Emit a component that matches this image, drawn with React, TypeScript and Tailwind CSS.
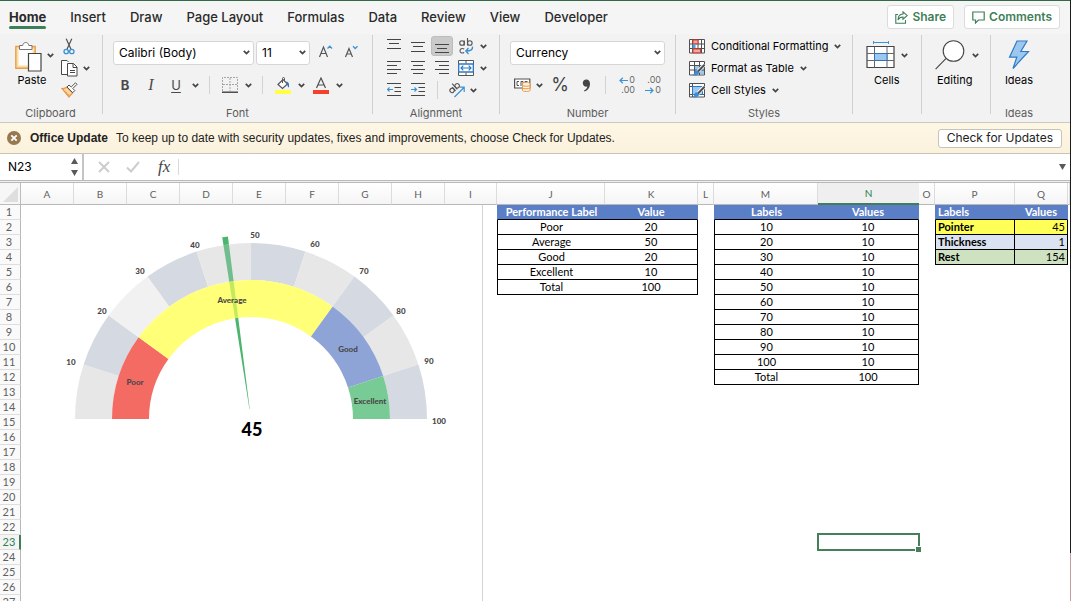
import type { ReactNode } from "react";

const columns = [
  ["A", "w-[53px]"],
  ["B", "w-[53px]"],
  ["C", "w-[53px]"],
  ["D", "w-[53px]"],
  ["E", "w-[53px]"],
  ["F", "w-[53px]"],
  ["G", "w-[53px]"],
  ["H", "w-[53px]"],
  ["I", "w-[52px]"],
  ["J", "w-[108px]"],
  ["K", "w-[93px]"],
  ["L", "w-[16px]"],
  ["M", "w-[104px]"],
  ["N", "w-[101px]"],
  ["O", "w-[16px]"],
  ["P", "w-[80px]"],
  ["Q", "w-[53px]"],
  ["", ""],
];

const tabs = ["Home", "Insert", "Draw", "Page Layout", "Formulas", "Data", "Review", "View", "Developer"];

const performance = [
  ["Performance Label", "Value"],
  ["Poor", "20"],
  ["Average", "50"],
  ["Good", "20"],
  ["Excellent", "10"],
  ["Total", "100"],
];

const scale = [
  ["Labels", "Values"],
  ["10", "10"],
  ["20", "10"],
  ["30", "10"],
  ["40", "10"],
  ["50", "10"],
  ["60", "10"],
  ["70", "10"],
  ["80", "10"],
  ["90", "10"],
  ["100", "10"],
  ["Total", "100"],
];

const pointer = [
  ["Labels", "Values", "bg-[#5b7fc7] text-white"],
  ["Pointer", "45", "bg-[#ffff57]"],
  ["Thickness", "1", "bg-[#dbe2f1]"],
  ["Rest", "154", "bg-[#cee1c0]"],
];

function Chevron() {
  return (
    <svg width="7" height="5" viewBox="0 0 7 5" className="shrink-0" aria-hidden="true">
      <path d="M0.8 0.9 3.5 3.6 6.2 0.9" fill="none" stroke="#444" strokeWidth="1.7" />
    </svg>
  );
}

function Tool({ label, className = "", children }: { label: string; className?: string; children: ReactNode }) {
  return (
    <button aria-label={label} className={`flex h-5 shrink-0 items-center justify-center ${className}`}>
      {children}
    </button>
  );
}

function Group({ name, className, children }: { name?: string; className: string; children: ReactNode }) {
  return (
    <section className={`flex h-[86px] shrink-0 flex-col ${className}`}>
      {children}
      {name && <div className="mt-auto text-center text-[11px] leading-4 text-[#5c5c5c]">{name}</div>}
    </section>
  );
}

function Divider() {
  return <div className="h-[79px] w-px shrink-0 bg-[#d0d0d0]" />;
}

function Rule() {
  return <div className="h-[18px] w-px shrink-0 bg-[#d2d2d2]" />;
}

function Picker({ label, options, className }: { label: string; options: string[]; className: string }) {
  return (
    <div className={`relative ${className}`}>
      <select
        aria-label={label}
        className="h-6 w-full appearance-none rounded-[3px] border border-[#d6d6d6] bg-white px-[5px] text-[12px] leading-5 text-black"
      >
        {options.map((o) => (
          <option key={o}>{o}</option>
        ))}
      </select>
      <span className="pointer-events-none absolute inset-y-0 right-1 flex items-center">
        <Chevron />
      </span>
    </div>
  );
}

function Lines({ rows }: { rows: number[][] }) {
  return (
    <svg width="14" height="16" viewBox="0 0 14 16" aria-hidden="true">
      {rows.map(([x, y, w]) => (
        <path key={y} d={`M${x} ${y + 0.5}h${w}`} stroke="#454545" />
      ))}
    </svg>
  );
}

function PasteIcon() {
  return (
    <svg width="30" height="32" viewBox="0 0 30 32" fill="none" aria-hidden="true">
      <path d="M1.8 6.5h19.4v21.8H1.8z" fill="#f9dfa0" stroke="#e8a04e" strokeWidth="1.4" />
      <path d="M4.5 9h14v16.5h-14z" fill="#fdfdfd" />
      <path d="M5.5 9.5v-4h3.2c.5-4 5.600-4 6.100 0h3.200v4z" fill="#fff" stroke="#777" />
      <path d="M14.500 13.500h12.500v17.500h-12.500z" fill="#fff" stroke="#444" strokeWidth="1.200" />
    </svg>
  );
}

function CutIcon() {
  return (
    <svg width="14" height="17" viewBox="0 0 14 17" fill="none" aria-hidden="true">
      <path d="M4.200 .8 9 11.300M9.800 .8 5 11.300" stroke="#505050" strokeWidth="1.200" />
      <circle cx="4.200" cy="13.500" r="2.200" stroke="#3c93d3" strokeWidth="1.300" />
      <circle cx="9.800" cy="13.500" r="2.200" stroke="#3c93d3" strokeWidth="1.300" />
    </svg>
  );
}

function CopyIcon() {
  return (
    <svg width="17" height="17" viewBox="0 0 17 17" fill="none" stroke="#484848" aria-hidden="true">
      <path d="M6.500 14.500h-6V.5h5.500l1.500 1.500" fill="#fff" />
      <path d="M6.500 3.500h6l3.500 3.500v9H6.500z" fill="#fff" />
      <path d="M12 3.500v4h4M9 10.500h5M9 12.500h5" />
    </svg>
  );
}

function BrushIcon() {
  return (
    <svg width="17" height="16" viewBox="0 0 17 16" fill="none" aria-hidden="true">
      <path d="M1 6.500c2 .2 3.500-.3 5-1.500l5.500 6c-1 1-2.500 2.500-3.500 4z" fill="#fbd79a" stroke="#e8944a" strokeWidth="1.200" />
      <path d="M3.500 9.500 6 11M6 12l2 1" stroke="#e8944a" />
      <path d="m6 5 2-2 2.200 2L14.500.8l1.500 1.500-4.200 4.200 2 2-2 2.200z" fill="#fff" stroke="#505050" />
    </svg>
  );
}

function FontSizeIcon({ grow }: { grow: boolean }) {
  return (
    <svg width="16" height="15" viewBox="0 0 16 15" fill="none" aria-hidden="true">
      {grow ? (
        <>
          <path d="M1.500 12 5.500 2l4 10M3 8.500h5" stroke="#555" strokeWidth="1.200" />
          <path d="m9.500 3.500 2.300-2.300L14 3.500" stroke="#3c93d3" strokeWidth="1.300" />
        </>
      ) : (
        <>
          <path d="M1.500 12 5 3.500 8.500 12M3 9h4.200" stroke="#555" strokeWidth="1.200" />
          <path d="M9 1.200 11.200 3.500l2.300-2.300" stroke="#3c93d3" strokeWidth="1.300" />
        </>
      )}
    </svg>
  );
}

function BordersIcon() {
  return (
    <svg width="16" height="16" viewBox="0 0 16 16" fill="none" aria-hidden="true">
      <path d="M.5 14V.5h15V14M8 1v13M1 7.500h14" stroke="#a6a6a6" strokeDasharray="2 1" />
      <path d="M0 15.200h16" stroke="#333" strokeWidth="1.300" />
    </svg>
  );
}

function FillIcon() {
  return (
    <svg width="16" height="17" viewBox="0 0 16 17" fill="none" aria-hidden="true">
      <path d="M3 7.500 8 2.500l4.500 4.500-5 4.500z" fill="#fff" stroke="#555" strokeWidth="1.200" />
      <path d="M7.500 6V1.500c0-1.500 2-1.500 2 0v2" stroke="#555" />
      <path d="M11 4.500c2.500 0 3.500 2 3 6-1.500-.5-1.500-2.500-2-4z" fill="#2f75b8" />
      <path d="M0 13h16v4H0z" fill="#ffff45" />
    </svg>
  );
}

function FontColorIcon() {
  return (
    <svg width="16" height="17" viewBox="0 0 16 17" fill="none" aria-hidden="true">
      <path d="M3.500 11 8 1l4.500 10M5 8h6" stroke="#505050" strokeWidth="1.200" />
      <path d="M0 13h16v4H0z" fill="#f5402c" />
    </svg>
  );
}

function WrapIcon() {
  return (
    <svg width="16" height="18" viewBox="0 0 16 18" fill="none" aria-hidden="true">
      <g stroke="#555" strokeWidth="1.100">
        <circle cx="4" cy="6" r="2.300" />
        <path d="M6.300 3.500v5M9.500 1v7.500M6.200 15.500c-2.500 1.300-4.200 0-4.200-1.700s1.700-3 4.200-1.700" />
        <circle cx="11.800" cy="6" r="2.300" />
      </g>
      <path d="M14.500 9.500c.5 3-1.500 4.500-6.500 4.500M10.500 11 7.800 14l2.700 3" stroke="#3a8fd0" strokeWidth="1.300" />
    </svg>
  );
}

function MergeIcon() {
  return (
    <svg width="16" height="16" viewBox="0 0 16 16" fill="none" aria-hidden="true">
      <path d="M.5 .5h15v15H.5zM8 .5v3M8 12.500v3" fill="#fff" stroke="#555" />
      <path d="M.7 4h14.600v8H.7z" fill="#fff" stroke="#2f78bf" strokeWidth="1.300" />
      <path d="M3 8h10M5.300 5.700 3 8l2.300 2.300M10.700 5.700 13 8l-2.300 2.300" stroke="#2f78bf" strokeWidth="1.200" />
    </svg>
  );
}

function IndentIcon({ right }: { right: boolean }) {
  return (
    <svg width="14" height="14" viewBox="0 0 14 14" fill="none" aria-hidden="true">
      <path d="M0 .5h14M7.500 4.500H14M7.500 8.500H14M0 12.500h14" stroke="#454545" />
      <path d={right ? "M0 6.500h5.500M3.500 4.500l2 2-2 2" : "M.5 6.500H6M2.500 4.500l-2 2 2 2"} stroke="#3c93d3" strokeWidth="1.200" />
    </svg>
  );
}

function OrientationIcon() {
  return (
    <svg width="17" height="16" viewBox="0 0 17 16" fill="none" aria-hidden="true">
      <g stroke="#555" strokeWidth="1.100" transform="rotate(-42 6 6)">
        <circle cx="3" cy="6.500" r="2.200" />
        <path d="M5.300 4.200v5M7.600 1.500v7.700" />
        <circle cx="9.800" cy="6.500" r="2.200" />
      </g>
      <path d="M6.500 15 16 5.500M11.500 5.200h4.700V10" stroke="#3c93d3" strokeWidth="1.200" />
    </svg>
  );
}

function CurrencyIcon() {
  return (
    <svg width="17" height="14" viewBox="0 0 17 14" fill="none" aria-hidden="true">
      <path d="M.6 1h15.200v9H.6z" fill="#fff" stroke="#505050" strokeWidth="1.200" />
      <path d="M5 3.500H3v4h2M7 8V3.500h2V6M11 5V3.500h2.500" stroke="#505050" />
      <path d="M8.500 5.500c0-1.500 7.500-1.500 7.500 0v7c0 1.300-7.500 1.300-7.500 0z" fill="#fff1df" stroke="#e79a4c" />
      <path d="M8.500 7.500c1 1 6.500 1 7.500 0M8.500 10c1 1 6.500 1 7.500 0" stroke="#e79a4c" />
    </svg>
  );
}

function DecimalIcon({ more }: { more: boolean }) {
  return (
    <span className="relative flex w-4 flex-col items-end text-[9px] leading-[10px] text-[#6b6b6b]">
      <span>{more ? "0" : ".00"}</span>
      <span>{more ? ".00" : "0"}</span>
      <svg
        width="9"
        height="7"
        viewBox="0 0 9 7"
        fill="none"
        className={more ? "absolute top-[2px] left-0" : "absolute bottom-px left-0"}
        aria-hidden="true"
      >
        <path d={more ? "M1 3.500h8M3.800.8 1 3.500l2.800 2.700" : "M0 3.500h8M5.200.8 8 3.500 5.200 6.200"} stroke="#3c93d3" strokeWidth="1.200" />
      </svg>
    </span>
  );
}

function ConditionalIcon() {
  return (
    <svg width="16" height="15" viewBox="0 0 16 15" fill="none" aria-hidden="true">
      <path d="M.5 .5h15v13.500H.5zM.5 5h15M.5 9.500h15M3.500 .5V14M12.500 .5V14M9 .5V14" fill="#fff" stroke="#505050" />
      <path d="M4 1h5v3.800H4zM4 10h7.500v3.800H4z" fill="#f6a79f" stroke="#dd3b2c" />
      <path d="M3.500 5.200h3v4h-3z" fill="#4a9de0" />
    </svg>
  );
}

function TableStyleIcon({ cell }: { cell: boolean }) {
  return (
    <svg width="16" height="15" viewBox="0 0 16 15" fill="none" aria-hidden="true">
      <path d="M.5 .5h15v13.500H.5z" fill="#fff" stroke="#505050" />
      {cell ? (
        <>
          <path d="M3.500 .5V14M.5 3.500h15M.5 11.500h15" stroke="#505050" />
          <path d="M3.500 3.500h10v8h-10z" fill="#9ac8ef" stroke="#2e77bd" />
        </>
      ) : (
        <>
          <path d="M5.500 4.500H15V13H5.500z" fill="#9ac8ef" />
          <path d="M5.500 .5V14M10.500 .5V14M.5 4.500h15M.5 9h15" stroke="#505050" />
        </>
      )}
      <path d="m15.500 3.500-7.500 8" stroke="#fff" strokeWidth="3.500" />
      <path d="m15.500 3.800-7 7.200" stroke="#505050" strokeWidth="2" />
      <path d="M8.500 9.500c-2-.5-3 .5-3.200 2.200-.2 1.200-1 1.800-2 2.100 3 1.200 6.700.7 6.700-2.500z" fill="#3d8cd4" />
    </svg>
  );
}

function CellsIcon() {
  return (
    <svg width="29" height="28" viewBox="0 0 29 28" fill="none" aria-hidden="true">
      <path d="M7.500 0v3M22.500 0v3M7.500 1.500h15" stroke="#3c93d3" />
      <path d="M1 5.500h27v21H1z" fill="#fff" stroke="#444" strokeWidth="1.200" />
      <path d="M1 12.500h27M1 19.500h27M8.500 5.500v21M21 5.500v21" stroke="#666" />
      <path d="M8.500 12.500H21v7H8.500z" fill="#9cc8f0" stroke="#2d74b9" />
    </svg>
  );
}

function SearchIcon() {
  return (
    <svg width="31" height="30" viewBox="0 0 31 30" fill="none" stroke="#444" strokeWidth="1.100" aria-hidden="true">
      <circle cx="18.500" cy="11" r="10.300" fill="#fff" />
      <path d="M11.100 18.400.6 29.200" />
    </svg>
  );
}

function BoltIcon() {
  return (
    <svg width="22" height="30" viewBox="0 0 22 30" aria-hidden="true">
      <path d="M9 1h10l-6.200 10.500h7.700L5 28.500l3.800-11.300H1.500z" fill="#9cc8f0" stroke="#2f7cc4" strokeWidth="1.200" />
    </svg>
  );
}

function BigTool({ label, icon, menu, className }: { label: string; icon: ReactNode; menu?: boolean; className: string }) {
  return (
    <button className={`flex flex-col text-[11px] leading-4 text-black ${className}`}>
      <span className="flex h-[34px] items-center gap-[6px]">
        {icon}
        {menu && <Chevron />}
      </span>
      <span className="flex">{label}</span>
    </button>
  );
}

function Ribbon() {
  return (
    <div className="flex bg-[#f2f2f2] pt-px pb-px">
      <Group name="Clipboard" className="w-[101px]">
        <div className="flex pl-[14px]">
          <button className="mt-1 flex w-[47px] flex-col text-[11px] leading-4 text-black">
            <span className="flex h-[33px] items-center gap-[3px]">
              <PasteIcon />
              <Chevron />
            </span>
            <span className="w-9 text-center">Paste</span>
          </button>
          <div className="flex flex-col items-start gap-[2px] pt-px">
            <Tool label="Cut" className="w-4">
              <CutIcon />
            </Tool>
            <Tool label="Copy" className="gap-[5px]">
              <CopyIcon />
              <Chevron />
            </Tool>
            <Tool label="Format Painter">
              <BrushIcon />
            </Tool>
          </div>
        </div>
      </Group>
      <div className="w-px" />
      <Divider />
      <Group name="Font" className="w-[269px]">
        <div className="flex items-center pt-1 pl-[10px]">
          <Picker label="Font" options={["Calibri (Body)", "Arial"]} className="w-[141px]" />
          <Picker label="Font size" options={["11", "12"]} className="ml-[2px] w-[54px]" />
          <Tool label="Increase font size" className="ml-2 w-4">
            <FontSizeIcon grow />
          </Tool>
          <Tool label="Decrease font size" className="ml-[10px] w-4">
            <FontSizeIcon grow={false} />
          </Tool>
        </div>
        <div className="mt-[10px] flex items-center pl-[10px] text-[13px] leading-5 text-[#4a4a4a]">
          <Tool label="Bold" className="w-6 font-bold">
            B
          </Tool>
          <Tool label="Italic" className="w-7 font-['Liberation_Serif',serif] text-[16px] italic">
            I
          </Tool>
          <Tool label="Underline" className="w-[22px] underline underline-offset-2">
            U
          </Tool>
          <Tool label="Underline style" className="w-4">
            <Chevron />
          </Tool>
          <div className="mr-3 ml-[6px]">
            <Rule />
          </div>
          <Tool label="Borders" className="w-[30px] gap-[7px]">
            <BordersIcon />
            <Chevron />
          </Tool>
          <div className="mr-3 ml-[10px]">
            <Rule />
          </div>
          <Tool label="Fill color" className="w-[30px] gap-[7px]">
            <FillIcon />
            <Chevron />
          </Tool>
          <Tool label="Font color" className="ml-2 w-[30px] gap-[7px]">
            <FontColorIcon />
            <Chevron />
          </Tool>
        </div>
      </Group>
      <Divider />
      <Group name="Alignment" className="w-[126px]">
        <div className="flex flex-col gap-[2px] pt-px pl-[9px]">
          <div className="flex">
            <Tool label="Top align" className="w-6">
              <Lines rows={[[0, 1, 14], [2, 5, 10], [0, 10, 14]]} />
            </Tool>
            <Tool label="Middle align" className="w-6">
              <Lines rows={[[0, 4, 14], [2, 8, 10], [0, 13, 14]]} />
            </Tool>
            <Tool label="Bottom align" className="mx-px w-[22px] rounded-[3px] border border-[#bdbdbd] bg-[#cacaca]">
              <Lines rows={[[0, 6, 14], [2, 10, 10], [0, 14, 14]]} />
            </Tool>
            <Tool label="Wrap text" className="w-6">
              <WrapIcon />
            </Tool>
            <Tool label="Wrap options" className="w-[10px]">
              <Chevron />
            </Tool>
          </div>
          <div className="flex">
            <Tool label="Align left" className="w-6">
              <Lines rows={[[0, 1, 14], [0, 5, 10], [0, 9, 14], [0, 13, 10]]} />
            </Tool>
            <Tool label="Center" className="w-6">
              <Lines rows={[[0, 1, 14], [2, 5, 10], [0, 9, 14], [2, 13, 10]]} />
            </Tool>
            <Tool label="Align right" className="w-6">
              <Lines rows={[[0, 1, 14], [4, 5, 10], [0, 9, 14], [4, 13, 10]]} />
            </Tool>
            <Tool label="Merge and center" className="w-6">
              <MergeIcon />
            </Tool>
            <Tool label="Merge options" className="w-[10px]">
              <Chevron />
            </Tool>
          </div>
          <div className="flex items-center">
            <Tool label="Decrease indent" className="w-6">
              <IndentIcon right={false} />
            </Tool>
            <Tool label="Increase indent" className="w-6">
              <IndentIcon right />
            </Tool>
            <div className="mr-[10px] ml-[7px]">
              <Rule />
            </div>
            <Tool label="Orientation" className="gap-[5px]">
              <OrientationIcon />
              <Chevron />
            </Tool>
          </div>
        </div>
      </Group>
      <Divider />
      <Group name="Number" className="w-[175px]">
        <div className="pt-1 pl-[10px]">
          <Picker label="Number format" options={["Currency", "General"]} className="w-[155px]" />
        </div>
        <div className="mt-[10px] flex items-center pl-[14px] text-[#444]">
          <Tool label="Accounting format" className="gap-[5px]">
            <CurrencyIcon />
            <Chevron />
          </Tool>
          <Tool label="Percent style" className="ml-[7px] w-5 text-[18px] leading-5">
            %
          </Tool>
          <Tool label="Comma style" className="ml-[9px] w-[14px]">
            <svg width="9" height="13" viewBox="0 0 9 13" aria-hidden="true">
              <path d="M4.300.5C6.800.5 8 2.300 8 4.800c0 4-2.500 6.700-5.500 7.700l-.5-1c2-.9 3.200-2.200 3.300-3.900C3 8.200.8 6.500.8 4 .8 2 2.300.5 4.300.5z" fill="#444" />
            </svg>
          </Tool>
          <div className="mr-3 ml-3">
            <Rule />
          </div>
          <Tool label="Increase decimal" className="w-[18px]">
            <DecimalIcon more />
          </Tool>
          <Tool label="Decrease decimal" className="ml-2 w-[18px]">
            <DecimalIcon more={false} />
          </Tool>
        </div>
      </Group>
      <Divider />
      <Group name="Styles" className="w-[176px]">
        <div className="flex flex-col items-start gap-[2px] pt-px pl-[13px] text-[11px] leading-5 text-black">
          <button className="flex h-5 items-center gap-[6px]">
            <ConditionalIcon />
            Conditional Formatting
            <Chevron />
          </button>
          <button className="flex h-5 items-center gap-[6px]">
            <TableStyleIcon cell={false} />
            Format as Table
            <Chevron />
          </button>
          <button className="flex h-5 items-center gap-[6px]">
            <TableStyleIcon cell />
            Cell Styles
            <Chevron />
          </button>
        </div>
      </Group>
      <Divider />
      <Group className="w-[68px] pt-[3px] pl-[13px]">
        <BigTool label="Cells" menu icon={<CellsIcon />} className="items-start [&>span:last-child]:ml-2" />
      </Group>
      <Divider />
      <Group className="w-[68px] pt-[3px] pl-[13px]">
        <BigTool label="Editing" menu icon={<SearchIcon />} className="items-start [&>span:last-child]:ml-[2px]" />
      </Group>
      <Divider />
      <Group name="Ideas" className="w-14 pt-[3px]">
        <BigTool label="Ideas" icon={<BoltIcon />} className="items-center" />
      </Group>
    </div>
  );
}

const CX = 251;
const CY = 419;

function point(value: number, r: number) {
  const a = Math.PI * (1 - value / 100);
  return `${(CX + r * Math.cos(a)).toFixed(2)} ${(CY - r * Math.sin(a)).toFixed(2)}`;
}

function ring(from: number, to: number, inner: number, outer: number) {
  return `M${point(from, outer)}A${outer} ${outer} 0 0 1 ${point(to, outer)}L${point(to, inner)}A${inner} ${inner} 0 0 0 ${point(from, inner)}Z`;
}

const outerBands = ["#e7e7e7", "#d5d9e2", "#f1f1f1", "#d5d9e2", "#e7e7e7", "#d5d9e2", "#e7e7e7", "#d5d9e2", "#e7e7e7", "#d5d9e2"];

const innerBands: [number, number, string][] = [
  [0, 20, "#f46b64"],
  [20, 70, "#ffff78"],
  [70, 90, "#8ea4d7"],
  [90, 100, "#78cb94"],
];

const needle: [number, number, string][] = [
  [10, 102, "#4cb56c"],
  [102, 139, "#c3ea5e"],
  [139, 176, "#72bd8d"],
  [176, 184, "#4cb56c"],
];

const chartLabels: [string, number, number][] = [
  ["10", 71, 365],
  ["20", 102, 314],
  ["30", 140, 274],
  ["40", 195, 248],
  ["50", 255, 238],
  ["60", 315, 247],
  ["70", 364, 274],
  ["80", 401, 314],
  ["90", 429, 364],
  ["100", 439, 424],
  ["Average", 232, 303],
  ["Poor", 135, 385],
  ["Good", 348, 352],
  ["Excellent", 370, 404],
];

function Gauge() {
  return (
    <svg width="461" height="396" viewBox="21 205 461 396" role="img" aria-label="Performance gauge" className="block">
      {outerBands.map((c, i) => (
        <path key={i} d={ring(i * 10, i * 10 + 10, 139, 176)} fill={c} />
      ))}
      {innerBands.map(([a, b, c]) => (
        <path key={a} d={ring(a, b, 102, 139)} fill={c} />
      ))}
      {needle.map(([r1, r2, c]) => (
        <path key={r1} d={ring(45, 46, r1, r2)} fill={c} />
      ))}
      <g className="text-[8px] font-black" fill="#484848" textAnchor="middle">
        {chartLabels.map(([t, x, y]) => (
          <text key={t} x={x} y={y}>
            {t}
          </text>
        ))}
      </g>
      <text x="252" y="436" textAnchor="middle" className="text-[18px] font-black" fill="#000">
        45
      </text>
    </svg>
  );
}

function PairCells({ pair, row }: { pair?: string[]; row: number }) {
  if (!pair) return null;
  const head = row === 1;
  const look = head ? "bg-[#5b7fc7] font-bold text-white" : "text-black";
  return (
    <>
      <td className={`border-b border-l border-b-black p-0 text-center ${head ? "border-l-[#5b7fc7]" : "border-l-black"} ${look}`}>{pair[0]}</td>
      <td className={`border-r border-b border-b-black p-0 text-center ${head ? "border-r-[#5b7fc7]" : "border-r-black"} ${look}`}>{pair[1]}</td>
    </>
  );
}

function Sheet() {
  const rows = Array.from({ length: 27 }, (_, i) => i + 1);
  return (
    <div className="min-h-0 flex-1 overflow-hidden bg-white">
      <table className="w-full table-fixed border-separate border-spacing-0 font-['Lato','Open_Sans',sans-serif] text-[11px] leading-[14px]">
        <colgroup>
          <col className="w-[21px]" />
          {columns.map(([name, w]) => (
            <col key={name} className={w} />
          ))}
        </colgroup>
        <thead>
          <tr className="h-[22px] text-[10px] text-[#606060]">
            <th scope="col" aria-label="Select all" className="border-r border-b border-[#bcbcbc] bg-[#f7f7f7] p-0">
              <svg width="15" height="15" viewBox="0 0 15 15" className="mt-[2px] ml-[3px] block" aria-hidden="true">
                <path d="M15 0v15H0z" fill="#dedede" />
              </svg>
            </th>
            {columns.map(([name]) => (
              <th
                key={name}
                scope="col"
                className={
                  name === "N"
                    ? "border-b-2 border-[#3f7e57] bg-[#efefef] p-0 font-normal text-[#2f8050]"
                    : "border-r border-b border-r-[#dcdcdc] border-b-[#b8b8b8] bg-linear-to-b from-white to-[#f5f5f5] p-0 font-normal"
                }
              >
                {name}
              </th>
            ))}
          </tr>
        </thead>
        <tbody>
          {rows.map((n) => (
            <tr key={n} className="h-[15px]">
              <th
                scope="row"
                className={
                  n === 23
                    ? "border-r-2 border-b border-r-[#3f7e57] border-b-[#dedede] bg-[#f4f4f4] p-0 pr-px font-normal text-[#2f8050]"
                    : "border-r border-b border-r-[#b8b8b8] border-b-[#dedede] bg-[#fafafa] p-0 pr-[2px] font-normal text-[#606060]"
                }
              >
                {n}
              </th>
              {n === 1 && (
                <td colSpan={9} rowSpan={27} className="p-0 align-top">
                  <div className="h-[405px] w-[462px] overflow-hidden border-r border-[#d4d4d4]">
                    <Gauge />
                  </div>
                </td>
              )}
              {n <= performance.length ? <PairCells pair={performance[n - 1]} row={n} /> : <td colSpan={2} className="p-0" />}
              <td className="p-0" />
              {n <= scale.length ? (
                <PairCells pair={scale[n - 1]} row={n} />
              ) : (
                <>
                  <td className="p-0" />
                  <td className="relative p-0">
                    {n === 23 && (
                      <div className="absolute -top-[2px] -right-px -bottom-px -left-px border-2 border-[#45805a]">
                        <span className="absolute -right-1 -bottom-1 size-[7px] border border-white bg-[#45805a]" />
                      </div>
                    )}
                  </td>
                </>
              )}
              <td className="p-0" />
              {n <= pointer.length ? (
                <>
                  <td
                    className={`border-b border-l border-b-black p-0 pl-[2px] text-left font-bold ${n === 1 ? "border-l-[#5b7fc7]" : "border-r border-l-black border-r-black"} ${pointer[n - 1][2]}`}
                  >
                    {pointer[n - 1][0]}
                  </td>
                  <td
                    className={`border-r border-b border-b-black p-0 ${n === 1 ? "border-r-[#5b7fc7] text-center font-bold" : "border-r-black pr-[2px] text-right"} ${pointer[n - 1][2]}`}
                  >
                    {pointer[n - 1][1]}
                  </td>
                </>
              ) : (
                <td colSpan={2} className="p-0" />
              )}
              <td className="p-0" />
            </tr>
          ))}
        </tbody>
      </table>
    </div>
  );
}

export default function App() {
  return (
    <div className="flex h-screen w-full overflow-hidden font-['Inter','Roboto',sans-serif]">
      <div className="flex min-w-0 flex-1 flex-col border-t border-[#336a49]">
        <header className="flex h-[33px] shrink-0 items-start bg-[#f5f5f5] pl-[9px]">
          <nav className="flex gap-6 pt-[6px] text-[13px] leading-5 font-medium text-[#2a2a2a]">
            {tabs.map((t) => (
              <button
                key={t}
                className={
                  t === "Home"
                    ? "relative font-bold after:absolute after:inset-x-0 after:-bottom-[2px] after:h-[3px] after:rounded-full after:bg-[#3c7f58]"
                    : ""
                }
              >
                {t}
              </button>
            ))}
          </nav>
          <div className="mt-1 mr-[10px] ml-auto flex gap-[10px] text-[12px] leading-5 font-semibold text-[#3f7f59]">
            <button className="flex h-6 items-center gap-1 rounded-[3px] border border-[#dcdcdc] bg-white px-[7px]">
              <svg width="13" height="13" viewBox="0 0 13 13" fill="none" stroke="#3f7f59" strokeWidth="1.100" aria-hidden="true">
                <path d="M3 3.500H.8v8.700h9.700V9" />
                <path d="M8 .8 12.200 4.500 8 8.200V6C5.500 6 4 6.800 3 9c0-4 2-5.800 5-6z" />
              </svg>
              Share
            </button>
            <button className="flex h-6 items-center gap-1 rounded-[3px] border border-[#dcdcdc] bg-white px-[7px]">
              <svg width="13" height="13" viewBox="0 0 13 13" fill="none" stroke="#3f7f59" strokeWidth="1.200" aria-hidden="true">
                <path d="M.8 1h11.400v8H6.500L3.500 12V9H.8z" />
              </svg>
              Comments
            </button>
          </div>
        </header>
        <Ribbon />
        <div className="flex h-8 shrink-0 items-center border-t border-b border-t-[#c9c9c9] border-b-[#c9c3b4] bg-linear-to-b from-[#fef7e3] to-[#fbf2de] pr-2 pl-[7px] font-['Liberation_Sans',sans-serif] text-[12px] leading-5 text-[#222]">
          <button aria-label="Dismiss">
            <svg width="14" height="14" viewBox="0 0 14 14" className="block" aria-hidden="true">
              <circle cx="7" cy="7" r="7" fill="#97784f" />
              <path d="m4.300 4.300 5.400 5.400M9.700 4.300 4.300 9.700" stroke="#fff" strokeWidth="1.800" />
            </svg>
          </button>
          <strong className="ml-[9px] font-bold">Office Update</strong>
          <span className="ml-2">To keep up to date with security updates, fixes and improvements, choose Check for Updates.</span>
          <button className="ml-auto h-[19px] rounded-[3px] border border-[#c6c3bb] bg-white px-2 font-['Inter',sans-serif] text-[12px] leading-4">
            Check for Updates
          </button>
        </div>
        <div className="flex h-[26px] shrink-0 items-center bg-white text-[#444]">
          <div className="flex h-full w-[84px] items-center justify-between border-r-2 border-[#c4c4c4] pr-1 pl-2">
            <input aria-label="Name box" defaultValue="N23" className="w-12 text-[12px] leading-5 text-black" />
            <svg width="7" height="20" viewBox="0 0 7 20" fill="#5a5a5a" aria-hidden="true">
              <path d="M0 7h7L3.500 1zM0 13h7l-3.500 6z" />
            </svg>
          </div>
          <button aria-label="Cancel" className="ml-[14px]">
            <svg width="12" height="12" viewBox="0 0 12 12" className="block" aria-hidden="true">
              <path d="m1 1 10 10M11 1 1 11" stroke="#cdcdcd" strokeWidth="2" />
            </svg>
          </button>
          <button aria-label="Enter" className="ml-4">
            <svg width="14" height="12" viewBox="0 0 14 12" className="block" aria-hidden="true">
              <path d="m1 6.500 4 4L13 1" fill="none" stroke="#cdcdcd" strokeWidth="2" />
            </svg>
          </button>
          <button aria-label="Insert function" className="ml-[18px] font-['Liberation_Serif',serif] text-[17px] leading-5 italic">
            fx
          </button>
          <div className="ml-2 h-4 w-px bg-[#d9d9d9]" />
          <input aria-label="Formula" className="h-5 min-w-0 flex-1 px-2 text-[12px]" />
          <button aria-label="Expand formula bar" className="mr-1">
            <svg width="7" height="6" viewBox="0 0 7 6" className="block" aria-hidden="true">
              <path d="M0 0h7L3.500 6z" fill="#5a5a5a" />
            </svg>
          </button>
        </div>
        <div className="h-[3px] shrink-0 border-t border-b border-[#b9b9b9] bg-[#f0f0f0]" />
        <Sheet />
      </div>
      <div className="flex w-px flex-col">
        <div className="flex-1 bg-[#1d1d1d]" />
        <div className="h-12 bg-[#c79c9c]" />
      </div>
    </div>
  );
}
